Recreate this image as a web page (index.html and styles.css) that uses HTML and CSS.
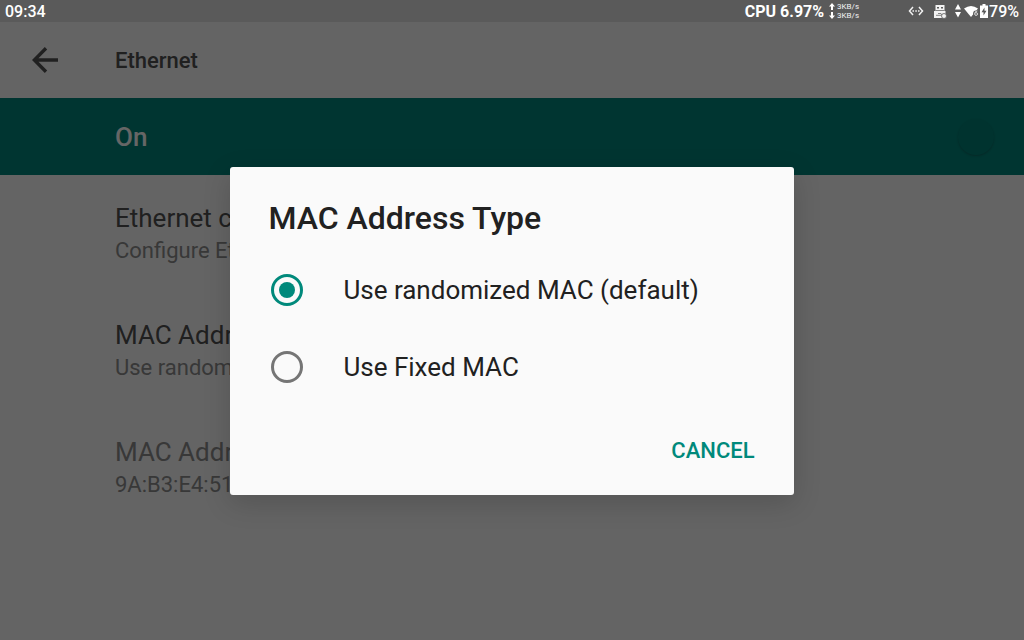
FILE: index.html
```html
<!DOCTYPE html>
<html lang="en">
<head>
    <meta charset="UTF-8">
    <meta name="viewport" content="width=device-width, initial-scale=1.0">
    <title>Ethernet</title>
    <link rel="stylesheet" href="styles.css">
</head>
<body>
    <!-- Status bar -->
    <div class="status_bar">
        <span class="clock">09:34</span>
        <span class="cpu">CPU 6.97%</span>
        <svg class="net_arrows" width="6" height="18" viewBox="0 0 6 18" fill="#fff">
            <path d="M3 1L6 4.500H4V8H2V4.500H0zM3 17L6 13.500H4V10H2v3.500H0z"/>
        </svg>
        <div class="net_speed">
            <span>3KB/s</span>
            <span>3KB/s</span>
        </div>
        <div class="status_icons">
            <svg width="16" height="12" viewBox="0 0 16 12" fill="none" stroke="#f2f2f2" stroke-width="1.500">
                <path d="M5 2L1.500 6l3.500 4M11 2L14.500 6l-3.500 4"/>
                <path d="M4.500 6h1.500M7.300 6h1.500M10 6h1.500"/>
            </svg>
            <svg class="usb" width="14" height="15" viewBox="0 0 14 15">
                <path fill="#f2f2f2" d="M2.500 1h9v6h1v7H1V7h1.500z"/>
                <path fill="#5a5a5a" d="M4 3h2v1.500H4zM8 3h2v1.500H8z"/>
                <path stroke="#777" stroke-width=".9" fill="none" d="M2.500 6.500h9M3 11.300h5M5 9.500h3l1 1.700"/>
                <circle cx="11" cy="12" r="2.500" fill="#f2f2f2" stroke="#5a5a5a" stroke-width=".8"/>
            </svg>
            <svg class="updown" width="6" height="14" viewBox="0 0 6 14" fill="#fff">
                <path d="M3 0l3 5.500H0zM0 8h6l-3 5.500z"/>
            </svg>
            <svg width="16" height="13" viewBox="0 0 16 13">
                <path fill="#fff" d="M0 3.500Q7 -1.500 14 3.500L7 12z"/>
                <circle cx="12" cy="8.500" r="2.900" fill="#5a5a5a"/>
                <path fill="none" stroke="#ddd" stroke-width="1" d="M13.300 6q-2.600 0-2.600 3a1.400 1.400 0 1 0 1.400-1.400q-.8 0-1.300.7"/>
            </svg>
            <svg class="battery" width="8" height="14" viewBox="0 0 8 14">
                <path fill="#fff" d="M2.500 0h3v1.500H8V14H0V1.500h2.500z"/>
                <path fill="#5a5a5a" d="M4.500 3.500L1.500 8.200h2v3.300l3-4.800h-2z"/>
            </svg>
            <span class="battery_level">79%</span>
        </div>
    </div>

    <div class="screen">
        <!-- Settings page -->
        <header class="toolbar">
            <a href="#" class="back" aria-label="Back">
                <svg width="26" height="26" viewBox="0 0 26 26" fill="none" stroke="#505050" stroke-width="3.400">
                    <path d="M26 13H2.500M14 1.300L2.300 13L14 24.700"/>
                </svg>
            </a>
            <h1>Ethernet</h1>
        </header>
        <div class="switch_bar">
            <label for="ethernet_switch">On</label>
            <input type="checkbox" id="ethernet_switch" checked>
        </div>
        <ul class="settings">
            <li>
                <span class="name">Ethernet configuration</span>
                <span class="summary">Configure Ethernet device</span>
            </li>
            <li>
                <span class="name">MAC Address Type</span>
                <span class="summary">Use randomized MAC (default)</span>
            </li>
            <li class="disabled">
                <span class="name">MAC Address</span>
                <span class="summary">9A:B3:E4:51</span>
            </li>
        </ul>

        <!-- Dialog -->
        <div class="scrim">
            <form class="dialog" role="dialog" aria-labelledby="dialog_title">
                <h2 id="dialog_title">MAC Address Type</h2>
                <div class="option">
                    <input type="radio" name="mac_type" id="mac_random" checked>
                    <label for="mac_random">Use randomized MAC (default)</label>
                </div>
                <div class="option">
                    <input type="radio" name="mac_type" id="mac_fixed">
                    <label for="mac_fixed">Use Fixed MAC</label>
                </div>
                <div class="buttons">
                    <button type="button">CANCEL</button>
                </div>
            </form>
        </div>
    </div>
</body>
</html>
```
FILE: styles.css
```css
* {
    margin: 0;
    padding: 0;
    box-sizing: border-box;
}

body {
    display: flex;
    flex-direction: column;
    min-height: 100vh;
    font-family: Roboto, "Noto Sans", sans-serif;
    background-color: #fafafa;
}

/* Status bar */
.status_bar {
    display: flex;
    align-items: center;
    height: 22px;
    padding: 0 5px;
    background-color: #5a5a5a;
    color: white;
    font-size: 16px;
    font-weight: 500;
}

.cpu {
    margin-left: auto;
    font-weight: 700;
}

.net_arrows {
    margin: 0 2px 0 5px;
}

.net_speed {
    display: flex;
    flex-direction: column;
    color: #f2f2f2;
    font-size: 8px;
    line-height: 9px;
    font-weight: 400;
}

.status_icons {
    display: flex;
    align-items: center;
    margin-left: 49px;
}

.usb {
    margin: 0 8px 0 9px;
}

.updown {
    margin-right: 3px;
}

.battery {
    margin-right: 1px;
}

/* Settings page */
.screen {
    position: relative;
    flex: 1;
}

.toolbar {
    display: flex;
    align-items: center;
    height: 76px;
    padding-left: 32px;
}

.back {
    display: flex;
    width: 83px;
}

.toolbar h1 {
    color: #505050;
    font-size: 22px;
    font-weight: 500;
}

.switch_bar {
    display: flex;
    align-items: center;
    justify-content: space-between;
    height: 77px;
    padding: 0 30px 0 115px;
    background-color: #00857a;
    color: white;
    font-size: 26px;
    font-weight: 500;
}

.switch_bar input {
    appearance: none;
    width: 36px;
    height: 36px;
    border-radius: 50%;
    background-color: #008076;
    box-shadow: 0 1px 2px rgba(40, 30, 40, 0.3);
}

.settings {
    list-style: none;
}

.settings li {
    display: flex;
    flex-direction: column;
    justify-content: center;
    height: 117px;
    padding-left: 115px;
}

.name {
    color: #505050;
    font-size: 26px;
    line-height: 34px;
}

.summary {
    color: #8c8c8c;
    font-size: 22px;
    line-height: 32px;
}

.disabled .name {
    color: #8c8c8c;
}

/* Dialog */
.scrim {
    position: absolute;
    inset: 0;
    display: flex;
    align-items: center;
    justify-content: center;
    background-color: rgba(0, 0, 0, 0.6);
}

.dialog {
    width: 55%;
    border-radius: 3px;
    background-color: #fafafa;
    box-shadow: 0 8px 28px rgba(0, 0, 0, 0.16);
}

.dialog h2 {
    padding: 30px 38px 12px;
    color: #212121;
    font-size: 32px;
    line-height: 42px;
    font-weight: 500;
}

.option {
    display: flex;
    align-items: center;
    height: 77px;
    padding-left: 41px;
}

.option input {
    appearance: none;
    width: 32px;
    height: 32px;
    margin-right: 40px;
    border: 3px solid #757575;
    border-radius: 50%;
}

.option input:checked {
    padding: 5px;
    border-color: #00897b;
    background-color: #00897b;
    background-clip: content-box;
}

.option label {
    color: #212121;
    font-size: 26px;
}

.buttons {
    display: flex;
    justify-content: flex-end;
    padding: 16px 23px;
}

.buttons button {
    height: 58px;
    padding: 0 16px;
    border: none;
    background-color: transparent;
    color: #00897b;
    font-family: inherit;
    font-size: 22px;
    font-weight: 500;
    cursor: pointer;
}
```
